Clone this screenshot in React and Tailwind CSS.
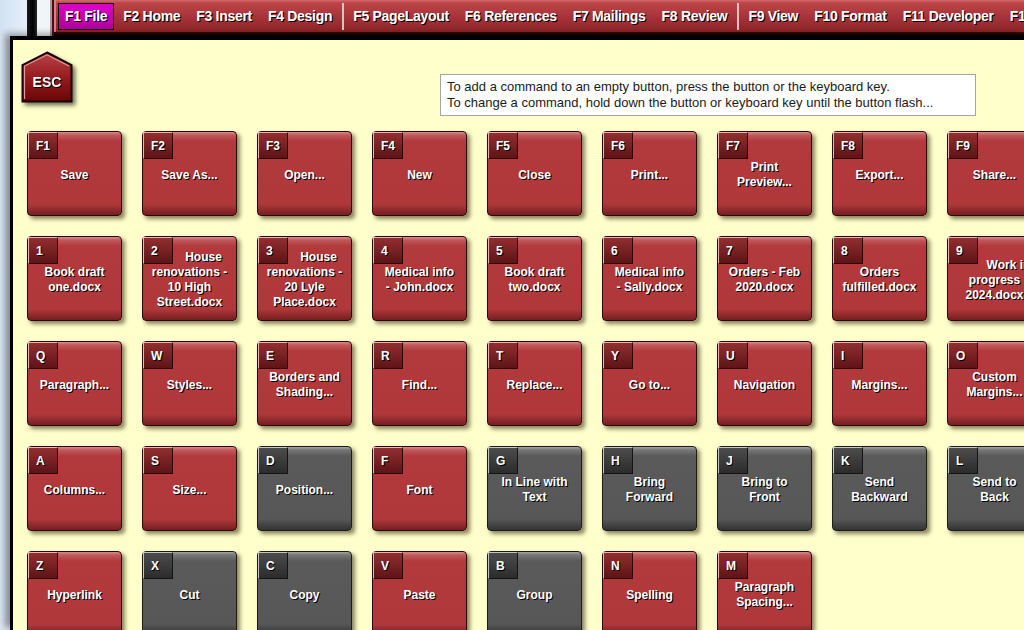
import React from "react";

const tabs = [
  ["F1 File", "F2 Home", "F3 Insert", "F4 Design"],
  ["F5 PageLayout", "F6 References", "F7 Mailings", "F8 Review"],
  ["F9 View", "F10 Format", "F11 Developer", "F12 Tools"],
];

// each key: [key, lines, gray?, indentFirstLine?]
const rows = [
  [
    ["F1", ["Save"]],
    ["F2", ["Save As..."]],
    ["F3", ["Open..."]],
    ["F4", ["New"]],
    ["F5", ["Close"]],
    ["F6", ["Print..."]],
    ["F7", ["Print", "Preview..."]],
    ["F8", ["Export..."]],
    ["F9", ["Share..."]],
  ],
  [
    ["1", ["Book draft", "one.docx"]],
    ["2", ["House", "renovations -", "10 High", "Street.docx"], false, true],
    ["3", ["House", "renovations -", "20 Lyle", "Place.docx"], false, true],
    ["4", ["Medical info", "- John.docx"]],
    ["5", ["Book draft", "two.docx"]],
    ["6", ["Medical info", "- Sally.docx"]],
    ["7", ["Orders - Feb", "2020.docx"]],
    ["8", ["Orders", "fulfilled.docx"]],
    ["9", ["Work in", "progress", "2024.docx"], false, true],
  ],
  [
    ["Q", ["Paragraph..."]],
    ["W", ["Styles..."]],
    ["E", ["Borders and", "Shading..."]],
    ["R", ["Find..."]],
    ["T", ["Replace..."]],
    ["Y", ["Go to..."]],
    ["U", ["Navigation"]],
    ["I", ["Margins..."]],
    ["O", ["Custom", "Margins..."]],
  ],
  [
    ["A", ["Columns..."]],
    ["S", ["Size..."]],
    ["D", ["Position..."], true],
    ["F", ["Font"]],
    ["G", ["In Line with", "Text"], true],
    ["H", ["Bring", "Forward"], true],
    ["J", ["Bring to", "Front"], true],
    ["K", ["Send", "Backward"], true],
    ["L", ["Send to", "Back"], true],
  ],
  [
    ["Z", ["Hyperlink"]],
    ["X", ["Cut"], true],
    ["C", ["Copy"], true],
    ["V", ["Paste"]],
    ["B", ["Group"], true],
    ["N", ["Spelling"]],
    ["M", ["Paragraph", "Spacing..."]],
  ],
];

function Separator() {
  return (
    <div className="w-[5px] h-[27px] ml-[1px] border-l border-r border-[#d8c4c4] bg-[#6e1c20]" />
  );
}

function Toolbar() {
  return (
    <div className="flex-1 min-w-0 flex flex-col overflow-hidden border-l-[2px] border-[#4a0e10]">
      <div className="h-[32px] flex items-center gap-[2px] pl-[4px] whitespace-nowrap bg-[linear-gradient(to_bottom,#d46a6e_0px,#bc4448_3px,#a8343a_16px,#8e2428_32px)] shadow-[inset_2px_0_0_#d88080]">
        {tabs.map((group, gi) => (
          <React.Fragment key={gi}>
            {gi > 0 && <Separator />}
            {group.map((t) => (
              <div
                key={t}
                className={`px-[6px] h-[27px] flex items-center text-[14px] font-bold text-white tracking-[-0.3px] [text-shadow:1px_1px_0_#000] ${
                  t === "F1 File"
                    ? "border border-black bg-[linear-gradient(to_bottom,#e000c8,#b0009a)]"
                    : "border border-transparent"
                }`}
              >
                {t}
              </div>
            ))}
          </React.Fragment>
        ))}
      </div>
      <div className="h-[4px] bg-[linear-gradient(to_bottom,#3a0c0c,#000)]" />
    </div>
  );
}

function EscButton() {
  return (
    <div className="relative w-[52px] h-[52px] mt-[11px] ml-[8px] drop-shadow-[3px_3px_2px_rgba(0,0,0,0.55)]">
      <svg width="52" height="52" viewBox="0 0 52 52">
        <defs>
          <linearGradient id="escg" x1="0" y1="0" x2="0" y2="1">
            <stop offset="0" stopColor="#b84446" />
            <stop offset="0.5" stopColor="#961c20" />
            <stop offset="1" stopColor="#6a0606" />
          </linearGradient>
        </defs>
        <polygon
          points="26,1.5 50.5,14 50.5,50.5 1.5,50.5 1.5,14"
          fill="url(#escg)"
          stroke="#1a0000"
          strokeWidth="2"
        />
        <polyline
          points="3.5,48 3.5,15 26,3.8 48,15"
          fill="none"
          stroke="#e49a9a"
          strokeWidth="1.2"
        />
      </svg>
      <div className="absolute inset-x-0 top-[21px] text-center text-[14px] font-bold text-white [text-shadow:1px_1px_0_#000]">
        ESC
      </div>
    </div>
  );
}

function KeyButton({ k, lines, gray, indent }) {
  const body = gray
    ? "border-[#1c1c1c] bg-[linear-gradient(to_bottom,#a4a4a4_0px,#767676_3px,#5a5a5a_9px,#575757_72px,#2c2c2c_85px)]"
    : "border-[#2a0808] bg-[linear-gradient(to_bottom,#dc8a8a_0px,#c05a5c_3px,#b23a3c_9px,#b0383a_72px,#6a1a1c_85px)]";
  const key = gray
    ? "bg-[linear-gradient(to_bottom,#4c4c4c,#2c2c2c)] border-t-[#c4c4c4] border-l-[#c4c4c4] border-r-[#141414] border-b-[#141414]"
    : "bg-[linear-gradient(to_bottom,#922e30,#5e1416)] border-t-[#eab4b4] border-l-[#eab4b4] border-r-[#2e0606] border-b-[#2e0606]";
  return (
    <div
      className={`relative w-[95px] h-[85px] rounded-[4px] border flex items-center justify-center shadow-[3px_3px_4px_rgba(40,30,0,0.55)] ${body}`}
    >
      <div
        className={`absolute top-0 left-0 w-[30px] h-[27px] border flex items-center pl-[7px] text-[12px] font-bold text-white [text-shadow:1px_1px_0_#000] ${key}`}
      >
        {k}
      </div>
      <div className="mt-[3px] flex flex-col items-center w-full px-[3px] text-[12px] leading-[15px] font-bold text-white text-center whitespace-nowrap [text-shadow:1px_1px_0_#000]">
        {lines.map((l, i) => (
          <div key={i} className={indent && i === 0 ? "pl-[28px]" : ""}>
            {l}
          </div>
        ))}
      </div>
    </div>
  );
}

export default function App() {
  return (
    <div className="w-[1024px] h-[630px] overflow-hidden flex flex-col bg-[#dce8f4] font-['Liberation_Sans',Arial,sans-serif]">
      <div className="flex h-[36px] shrink-0">
        <div className="w-[27px] bg-[linear-gradient(to_right,#d2e2f2,#e6eff9)]" />
        <div className="w-[10px] bg-[linear-gradient(to_right,#1a1a1a,#000_60%,#2a2a2a)]" />
        <div className="w-[13px] bg-[#f2f5f8]" />
        <div className="w-[2px] bg-[#9c9c9c]" />
        <Toolbar />
      </div>

      <div className="ml-[10px] flex-1 min-h-0 overflow-hidden bg-[#ffffcc] border-l-[3px] border-t-[4px] border-black shadow-[-5px_-2px_7px_rgba(0,0,0,0.4)]">
        <div className="flex items-start h-[91px]">
          <EscButton />
          <div className="ml-[367px] mt-[34px] w-[536px] h-[42px] border border-[#a4a4a4] bg-white px-[6px] pt-[4px] text-[13px] leading-[16px] text-[#1a1a1a] whitespace-nowrap overflow-hidden">
            <div>To add a command to an empty button, press the button or the keyboard key.</div>
            <div>To change a command, hold down the button or keyboard key until the button flash...</div>
          </div>
        </div>

        <div className="grid grid-cols-[repeat(9,95px)] gap-x-[20px] gap-y-[20px] pl-[14px]">
          {rows.map((row) =>
            row.map(([k, lines, gray, indent]) => (
              <KeyButton key={k} k={k} lines={lines} gray={gray} indent={indent} />
            ))
          )}
        </div>
      </div>
    </div>
  );
}
